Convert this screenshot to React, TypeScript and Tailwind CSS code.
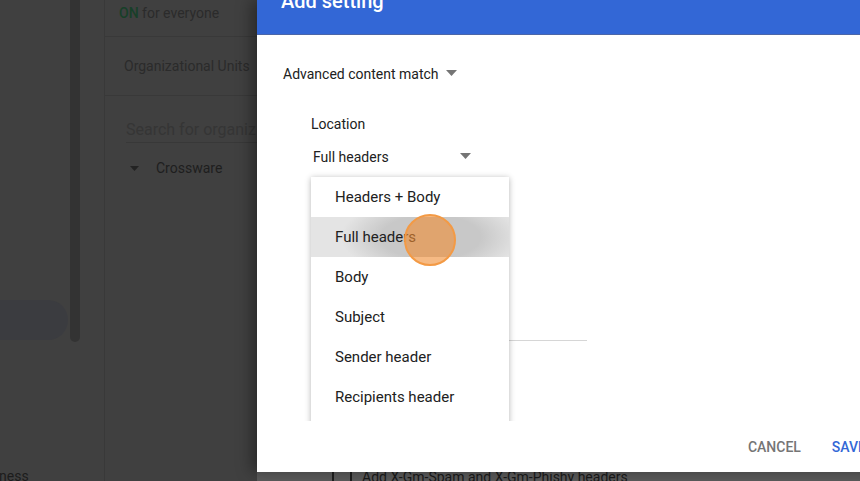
import React from 'react'

const items = ['Headers + Body', 'Full headers', 'Body', 'Subject', 'Sender header', 'Recipients header', 'Attachments']

function Caret({ className = '' }: { className?: string }) {
  return (
    <svg width="11" height="6" viewBox="0 0 11 6" className={className}>
      <path d="M0 0h11L5.5 6z" fill="#757575" />
    </svg>
  )
}

function BackgroundPage() {
  return (
    <div className="flex h-full w-full">
      {/* left nav */}
      <div className="relative flex w-[70px] shrink-0 flex-col">
        <div className="mt-[300px] h-[40px] w-[68px] rounded-r-full bg-[#3b3c40]" />
        <div className="mt-auto mb-[-6px] -ml-[1px] text-[14px] text-[#1c1c1c]">ness</div>
      </div>
      {/* scrollbar */}
      <div className="w-[10px] shrink-0">
        <div className="h-[342px] w-[10px] rounded-b-full bg-[#333333]" />
      </div>
      <div className="w-[24px] shrink-0" />
      {/* org panel */}
      <div className="flex w-[153px] shrink-0 flex-col border-l border-[#393939]">
        <div className="h-[37px] border-b border-[#393939] pl-[14px] pt-[3px] text-[14px] leading-[20px] whitespace-nowrap">
          <span className="font-medium text-[#173f28]">ON</span>
          <span className="text-[#2b2b2b]"> for everyone</span>
        </div>
        <div className="flex h-[59px] items-center border-b border-[#393939] pl-[19px] text-[14px] text-[#2b2b2b]">
          Organizational Units
        </div>
        <div className="ml-[21px] mt-[21px] flex h-[26px] items-center border-b border-[#383838] text-[16px] whitespace-nowrap text-[#353535]">
          Search for organiz
        </div>
        <div className="ml-[25px] mt-[15px] flex items-center gap-[17px] text-[14px] text-[#1e1e1e]">
          <svg width="9" height="5" viewBox="0 0 9 5">
            <path d="M0 0h9L4.5 5z" fill="#232323" />
          </svg>
          Crossware
        </div>
      </div>
      {/* main content under dialog */}
      <div className="flex flex-1 flex-col">
        <div className="flex-1" />
        <div className="flex h-[9px] items-start bg-[#5b5b5b]">
          <div className="ml-[75px] h-[9px] w-[2px] bg-[#1f1f1f]" />
          <div className="ml-[16px] h-[9px] w-[2px] bg-[#1f1f1f]" />
          <div className="ml-[10px] -mt-[2px] text-[14px] leading-[14px] whitespace-nowrap text-[#1a1a1a]">
            Add X-Gm-Spam and X-Gm-Phishy headers
          </div>
        </div>
      </div>
    </div>
  )
}

function Dialog() {
  return (
    <div className="absolute left-[257px] top-0 flex h-[472px] w-[640px] flex-col bg-white shadow-[-6px_0_14px_rgba(0,0,0,0.35)]">
      <div className="h-[35px] shrink-0 border-b border-[#4b66a8] bg-[#3367d6] pl-[24px]">
        <div className="-mt-[11px] text-[20px] font-medium leading-[24px] text-white">Add setting</div>
      </div>
      <div className="relative flex-1">
        <div className="ml-[26px] mt-[29px] flex items-center gap-[7px] text-[14px] text-[#212121]">
          Advanced content match
          <Caret className="-mt-[4px]" />
        </div>
        <div className="ml-[54px] mt-[29px] text-[14px] text-[#212121]">Location</div>
        <div className="ml-[56px] mt-[12px] flex w-[158px] items-center justify-between text-[14px] text-[#212121]">
          <span>Full headers</span>
          <Caret className="-mt-[4px]" />
        </div>
        <div className="ml-[252px] mt-[172px] h-px w-[78px] bg-[#d6d6d6]" />
        <div className="absolute bottom-[14px] right-[31px] flex items-center gap-[31px] text-[14px] font-medium">
          <span className="text-[#757575]">CANCEL</span>
          <span className="text-[#3367d6]">SAVE</span>
        </div>
      </div>
    </div>
  )
}

function Menu() {
  return (
    <div className="absolute left-[303px] top-[170px] h-[251px] w-[214px] overflow-hidden pl-[8px] pt-[7px]">
      <div className="h-[262px] w-[198px] bg-white shadow-[0_1px_6px_rgba(0,0,0,0.3)]">
        {items.map((it, i) => (
          <div
            key={it}
            className={
              'flex h-[40px] items-center pl-[24px] text-[15px] text-[#212121] ' +
              (i === 1 ? 'bg-[radial-gradient(ellipse_90px_40px_at_120px_50%,#c8c8c8_55%,#e4e4e4_100%)]' : '')
            }
          >
            {it}
          </div>
        ))}
      </div>
    </div>
  )
}

export default function App() {
  return (
    <div className="relative h-[481px] w-[860px] overflow-hidden bg-[#404040] font-['Roboto',sans-serif]">
      <BackgroundPage />
      <Dialog />
      <Menu />
      <div className="absolute left-[404px] top-[214px] h-[52px] w-[52px] rounded-full border-2 border-[#f39a45] bg-[rgba(240,140,50,0.6)]" />
    </div>
  )
}
